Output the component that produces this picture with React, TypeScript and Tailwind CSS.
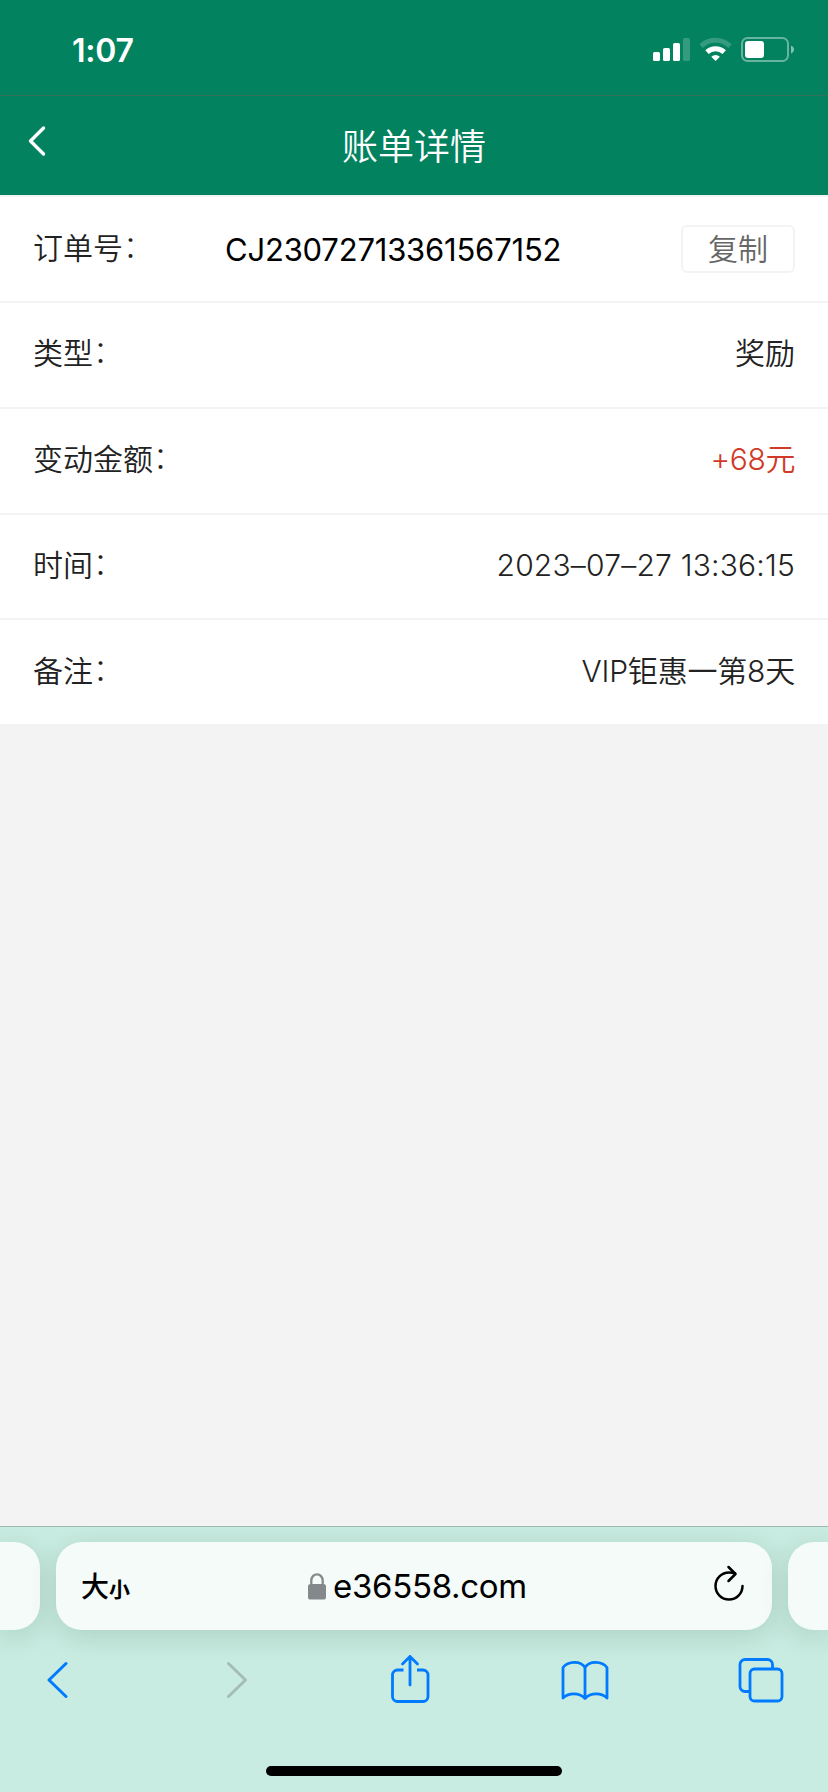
import React from 'react';
import { clsx } from 'clsx';

interface RowProps {
  label: string;
  children: React.ReactNode;
  className?: string;
}

const SignalIcon = () => (
  <svg width="37" height="25" viewBox="0 0 37 25" fill="#fff">
    <rect x="0" y="15" width="7" height="9" rx="1.6" />
    <rect x="10" y="11" width="7" height="13" rx="1.6" />
    <rect x="20" y="6" width="7" height="18" rx="1.6" />
    <rect x="30" y="1" width="7" height="23" rx="1.6" opacity="0.2" />
  </svg>
);

const WifiIcon = () => (
  <svg width="32" height="25" viewBox="0 0 32 25" fill="none" stroke="#fff" strokeWidth="5">
    <path d="M1.1 9.1a20.9 20.9 0 0 1 29 0" opacity="0.2" />
    <path d="M7 15.1a12.4 12.4 0 0 1 17.2 0" />
    <path d="M15.6 24l-4.3-4.3a6.2 6.2 0 0 1 8.6 0z" fill="#fff" stroke="none" />
  </svg>
);

const BatteryIcon = () => (
  <svg width="53" height="25" viewBox="0 0 53 25">
    <rect x="1" y="1" width="46" height="23" rx="5.5" fill="none" stroke="#fff" strokeWidth="2" opacity="0.4" />
    <rect x="4" y="4" width="19" height="17" rx="3" fill="#fff" />
    <path d="M50 8.5c4 1.500 4 6.500 0 8z" fill="#fff" opacity="0.5" />
  </svg>
);

const Label = ({ text }: { text: string }) => (
  <span>
    {text}
    <span className="align-[2px] leading-none font-light">：</span>
  </span>
);

const Row: React.FC<RowProps> = ({ label, children, className }) => (
  <div className="flex h-[105.8px] items-center justify-between border-b-2 border-[#f3f3f3] px-[33px] pb-[3px] text-[30px] leading-[42px] text-[#222]">
    <Label text={label} />
    <span className={clsx(className)}>{children}</span>
  </div>
);

const Header = () => (
  <header className="bg-[#02825f] text-white">
    <div className="flex h-24 items-center justify-between border-b border-[#35705c] pt-1 pr-[34px] pl-[72px]">
      <span className="pt-0.5 text-[32px] leading-none font-semibold tracking-[-0.2px]">1:07</span>
      <div className="flex items-center">
        <SignalIcon />
        <span className="ml-2.5">
          <WifiIcon />
        </span>
        <span className="ml-[9px]">
          <BatteryIcon />
        </span>
      </div>
    </div>
    <div className="grid h-[99px] grid-cols-[100px_1fr_100px] items-center">
      <svg className="mb-2.5 ml-7" width="20" height="32" viewBox="0 0 20 32" fill="none" stroke="#fff" strokeWidth="3.4" strokeLinecap="round" strokeLinejoin="round">
        <path d="M15.500 3L2.500 16l13 13" />
      </svg>
      <h1 className="pt-0.5 text-center text-[36px] leading-[50px] font-[350]">账单详情</h1>
    </div>
  </header>
);

const AddressBar = () => (
  <div className="flex gap-4">
    <div className="h-[88px] w-10 rounded-r-[26px] bg-[#f4fbf9] shadow-[0_6px_28px_rgba(0,40,20,0.14)]" />
    <div className="flex h-[88px] w-[716px] items-center rounded-[26px] bg-[#f4fbf9] pr-[27px] pl-[25px] text-black shadow-[0_6px_28px_rgba(0,40,20,0.14)]">
      <div className="flex w-[227px] items-baseline pt-0.5 font-medium">
        <span className="text-[28px]">大</span>
        <span className="text-[21px] font-bold">小</span>
      </div>
      <svg width="18" height="27" viewBox="0 0 18 27" fill="none">
        <path d="M3.300 12V7.500a5.700 6.200 0 0 1 11.400 0V12" stroke="#87898b" strokeWidth="2.300" />
        <rect x="0" y="11" width="18" height="15.500" rx="2.600" fill="#85888a" />
      </svg>
      <span className="ml-[7px] flex-1 pt-0.5 text-[33px] tracking-[-0.3px]">e36558.com</span>
      <svg className="mb-1" width="32" height="38" viewBox="0 0 32 38" fill="none" stroke="#000" strokeWidth="2.500" strokeLinecap="round" strokeLinejoin="round">
        <path d="M29.500 21a13.500 13.500 0 1 1-13.500-13.500c2 0 4 .3 6 1" />
        <path d="M15.500 2l7 7-7 7" />
      </svg>
    </div>
    <div className="h-[88px] w-10 rounded-l-[26px] bg-[#f4fbf9] shadow-[0_6px_28px_rgba(0,40,20,0.14)]" />
  </div>
);

const NavBar = () => (
  <nav className="flex h-[100px] items-center text-[#007aff]">
    <svg className="ml-[46px]" width="22" height="52" viewBox="0 0 22 52" fill="none" stroke="currentColor" strokeWidth="3" strokeLinecap="round" strokeLinejoin="round">
      <path d="M20 9.500L3 26l17 16.500" />
    </svg>
    <svg className="ml-[158px]" width="22" height="52" viewBox="0 0 22 52" fill="none" stroke="#a5bdb5" strokeWidth="3" strokeLinecap="round" strokeLinejoin="round">
      <path d="M2.500 9.500l17 16.500-17 16.500" />
    </svg>
    <svg className="ml-[142px]" width="40" height="52" viewBox="0 0 40 52" fill="none" stroke="currentColor" strokeWidth="2.800" strokeLinejoin="round">
      <path d="M13.500 16H7.500a5 5 0 0 0-5 5v21.500a5 5 0 0 0 5 5h25.500a5 5 0 0 0 5-5V21a5 5 0 0 0-5-5h-6" />
      <path d="M20 31V2.500M12.500 10L20 2.500l7.500 7.500" strokeLinecap="round" />
    </svg>
    <svg className="ml-[131px]" width="48" height="52" viewBox="0 0 48 52" fill="none" stroke="currentColor" strokeWidth="2.800" strokeLinejoin="round">
      <path d="M24 13.500C19.500 6.500 7 7 2 13.500V44c6-5.500 16-5.500 22 .5 6-6 16-6 22-.5V13.500C41 7 28.500 6.500 24 13.500zV44.500" />
    </svg>
    <svg className="ml-[129px]" width="46" height="52" viewBox="0 0 46 52" fill="none" stroke="currentColor" strokeWidth="2.800">
      <path d="M12 37.500H7a5 5 0 0 1-5-5V10.500a5 5 0 0 1 5-5H29.500a5 5 0 0 1 5 5v4.500" />
      <rect x="12" y="15" width="32" height="32" rx="4.500" />
    </svg>
  </nav>
);

export default function App() {
  return (
    <div className="flex h-[1792px] w-[828px] flex-col overflow-hidden bg-[#f3f3f3] font-['Inter','Noto_Sans_CJK_SC',sans-serif]">
      <Header />
      <main className="mt-0.5 flex-1">
        <section className="bg-white font-[350]">
          <div className="flex h-[106px] items-center border-b-2 border-[#f3f3f3] px-[33px] text-[30px] leading-[42px] text-[#222]">
            <span className="w-[192px] pb-[3px]">
              <Label text="订单号" />
            </span>
            <span className="flex-1 pt-px text-[31px] font-normal tracking-[-0.2px] text-black">CJ23072713361567152</span>
            <button className="h-12 w-[114px] rounded-md border-2 border-[#f3f3f3] pb-px leading-[42px] text-[#666]">复制</button>
          </div>
          <Row label="类型">奖励</Row>
          <Row label="变动金额" className="tracking-[-0.4px] text-[#d03a26]">+68元</Row>
          <Row label="时间" className="tracking-[0.2px]">2023–07–27 13:36:15</Row>
          <Row label="备注" className="tracking-[-0.2px]">VIP钜惠一第8天</Row>
        </section>
      </main>
      <footer className="flex h-[266px] flex-col overflow-hidden border-t border-[#9dbbb2] bg-[#c8ece1] pt-[15px]">
        <AddressBar />
        <NavBar />
        <div className="mx-auto mt-9 h-2.5 w-[296px] rounded-full bg-black" />
      </footer>
    </div>
  );
}
